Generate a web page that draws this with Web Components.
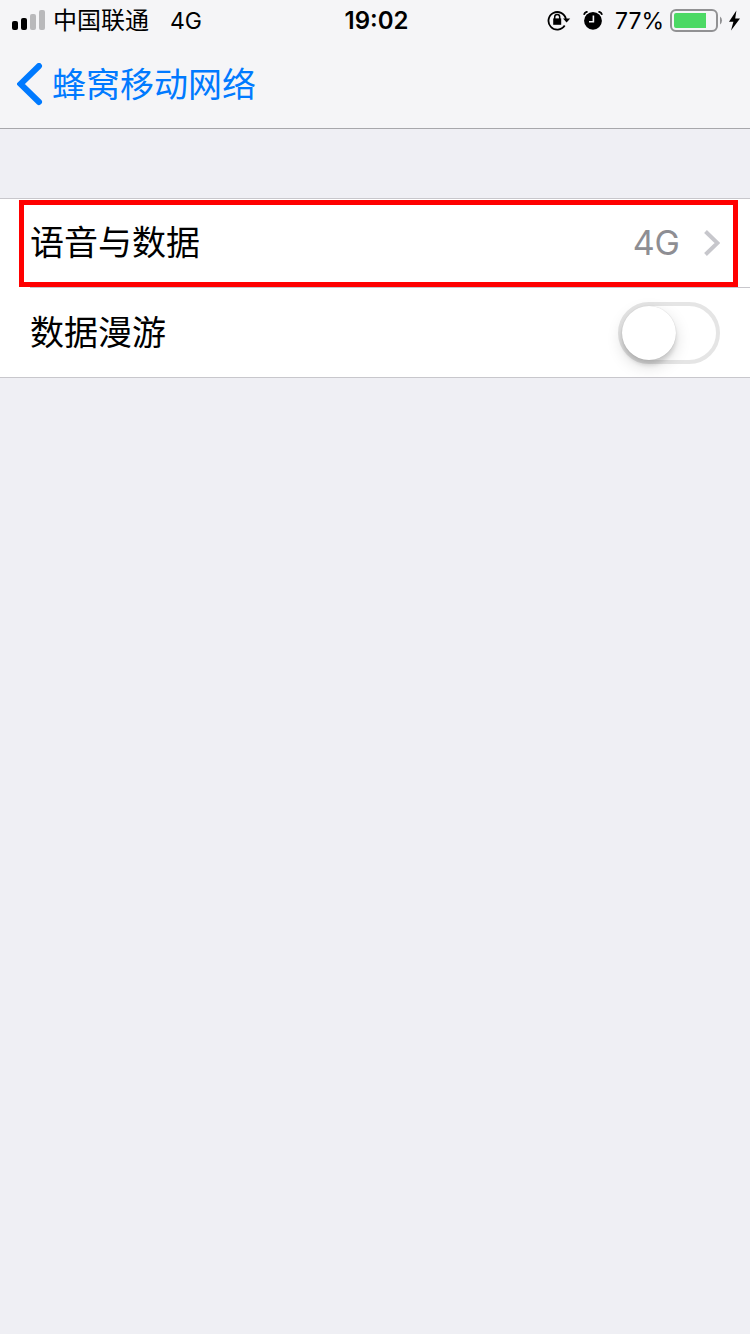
<!DOCTYPE html>
<html lang="zh-CN">
<head>
<meta charset="utf-8">
<meta name="viewport" content="width=device-width, initial-scale=1">
<title>蜂窝移动网络</title>
<style>
  html, body { margin: 0; min-height: 100%; background: #efeff4; }
  body { font-family: Inter, "Noto Sans CJK SC", sans-serif; color: #000; }
</style>
</head>
<body>
<settings-page></settings-page>
<script>
const define = (name, html, setup) => {
  const template = document.createElement('template');
  template.innerHTML = html;
  customElements.define(name, class extends HTMLElement {
    constructor() {
      super();
      this.attachShadow({ mode: 'open' }).append(template.content.cloneNode(true));
      if (setup) setup(this);
    }
  });
};

define('signal-bars', `
  <style>:host { display: block; line-height: 0; }</style>
  <svg width="33" height="22" viewBox="0 0 33 22" aria-hidden="true">
    <rect x="0" y="11" width="6" height="9" rx="2"/>
    <rect x="9" y="8" width="6" height="12" rx="2"/>
    <rect x="18" y="4" width="6" height="16" rx="2" fill="#b9b9bb"/>
    <rect x="27" y="0" width="6" height="20" rx="2" fill="#b9b9bb"/>
  </svg>`);

define('rotation-lock-icon', `
  <style>:host { display: block; line-height: 0; }</style>
  <svg width="24" height="22" viewBox="0 0 24 22" aria-hidden="true">
    <path d="M17.7 15.6A8.8 8.8 0 1 1 18.9 9" fill="none" stroke="#000" stroke-width="1.8"/>
    <path d="M16 8.6H23.2L19.6 12.6Z"/>
    <path d="M6.2 8.4H14.2V14.8H6.2Z"/>
    <path d="M7.7 9V6.9a2.5 2.5 0 0 1 5 0V9" fill="none" stroke="#000" stroke-width="1.5"/>
  </svg>`);

define('alarm-icon', `
  <style>:host { display: block; line-height: 0; }</style>
  <svg width="20" height="20" viewBox="0 0 20 20" aria-hidden="true">
    <circle cx="10" cy="9.8" r="8.9"/>
    <path d="M0.6 4.4A5 5 0 0 1 4.6 0.6M15.4 0.6A5 5 0 0 1 19.4 4.4" fill="none" stroke="#f5f5f7" stroke-width="4"/>
    <path d="M0.9 3.7A4.6 4.6 0 0 1 4.6 0.6M15.4 0.6A4.6 4.6 0 0 1 19.1 3.7" fill="none" stroke="#000" stroke-width="1.8"/>
    <path d="M10.4 4.6V10.8H6" fill="none" stroke="#f5f5f7" stroke-width="1.6"/>
  </svg>`);

define('battery-icon', `
  <style>:host { display: block; line-height: 0; }</style>
  <svg width="71" height="24" viewBox="0 0 71 24" aria-hidden="true">
    <rect x="1" y="1" width="46" height="21" rx="5" fill="none" stroke="#919193" stroke-width="2"/>
    <path d="M4 6a2 2 0 0 1 2-2H36V19H6a2 2 0 0 1-2-2Z" fill="#4cd964"/>
    <path d="M50 7.5A5 5 0 0 1 50 15.5Z" fill="#919193"/>
    <path d="M66.4 1.5L59 12.8H63.4L61 21.5L70 9.6H65.2Z"/>
  </svg>`);

define('status-bar', `
  <style>
    :host { display: grid; grid-template-columns: 1fr auto 1fr; align-items: center; height: 42px;
            padding: 0 9px 0 12px; font-size: 24px; line-height: 42px; }
    .left, .right { display: flex; align-items: center; }
    .left { gap: 8px; }
    .network { margin-left: 13px; font-size: 23px; }
    .right { justify-content: flex-end; font-size: 23px; }
    .time { font-weight: 600; }
    alarm-icon { margin: 0 12px; }
    battery-icon { margin-left: 6px; }
  </style>
  <div class="left"><signal-bars></signal-bars><span>中国联通</span><span class="network">4G</span></div>
  <span class="time">19:02</span>
  <div class="right"><rotation-lock-icon></rotation-lock-icon><alarm-icon></alarm-icon><span>77%</span><battery-icon></battery-icon></div>`);

define('nav-bar', `
  <style>
    :host { display: flex; align-items: center; height: 86px; padding: 0 17px; border-bottom: 1px solid #a7a7ab; }
    a { display: flex; align-items: center; gap: 9px; color: #007aff; font-size: 34px; line-height: 48px; text-decoration: none; }
  </style>
  <a href="#"><svg width="26" height="44" viewBox="0 0 26 44" aria-hidden="true"><path d="M22 3L3.5 21L22 39" fill="none" stroke="#007aff" stroke-width="6" stroke-linecap="round"/></svg><slot></slot></a>`);

define('settings-list', `
  <style>:host { display: block; background: #fff; border: solid #c8c7cc; border-width: 1px 0; }</style>
  <slot></slot>`);

define('link-row', `
  <style>
    :host { display: block; position: relative; }
    a { display: flex; align-items: center; height: 88px; margin-left: 30px; padding-right: 30px;
        border-bottom: 1px solid #c8c7cc; color: #000; font-size: 34px; line-height: 48px; text-decoration: none; }
    .value { margin-left: auto; margin-right: 24px; color: #8e8e93; }
    :host([highlighted])::after { content: ""; position: absolute; inset: 1px 12px 1px 19px; border: 5px solid #f00; pointer-events: none; }
  </style>
  <a href="#"><slot></slot><span class="value"><slot name="value"></slot></span><svg width="16" height="26" viewBox="0 0 16 26" aria-hidden="true"><path d="M1.5 1.5L13.5 13L1.5 24.5" fill="none" stroke="#c7c7cc" stroke-width="4"/></svg></a>`);

define('switch-row', `
  <style>
    :host { display: block; }
    label { display: flex; align-items: center; justify-content: space-between; height: 89px; padding: 0 30px;
            font-size: 34px; line-height: 48px; }
    input { appearance: none; box-sizing: border-box; display: flex; width: 102px; height: 62px; margin: 0;
            border: 4px solid #e5e5e5; border-radius: 31px; background: #fff; }
    input::before { content: ""; width: 54px; height: 54px; border-radius: 50%; background: #fff;
            box-shadow: 0 6px 16px rgba(0,0,0,.15), 0 5px 4px rgba(0,0,0,.12), 0 0 1px rgba(0,0,0,.2); }
    input:checked { background: #4cd964; border-color: #4cd964; justify-content: flex-end; }
  </style>
  <label><slot></slot><input type="checkbox" role="switch"></label>`,
  host => host.shadowRoot.querySelector('input').setAttribute('aria-label', host.textContent || '数据漫游'));

define('settings-page', `
  <style>
    :host { display: block; }
    header { background: #f5f5f7; }
    main { padding-top: 69px; }
  </style>
  <header><status-bar></status-bar><nav-bar>蜂窝移动网络</nav-bar></header>
  <main>
    <settings-list>
      <link-row highlighted>语音与数据<span slot="value">4G</span></link-row>
      <switch-row>数据漫游</switch-row>
    </settings-list>
  </main>`);
</script>
</body>
</html>
